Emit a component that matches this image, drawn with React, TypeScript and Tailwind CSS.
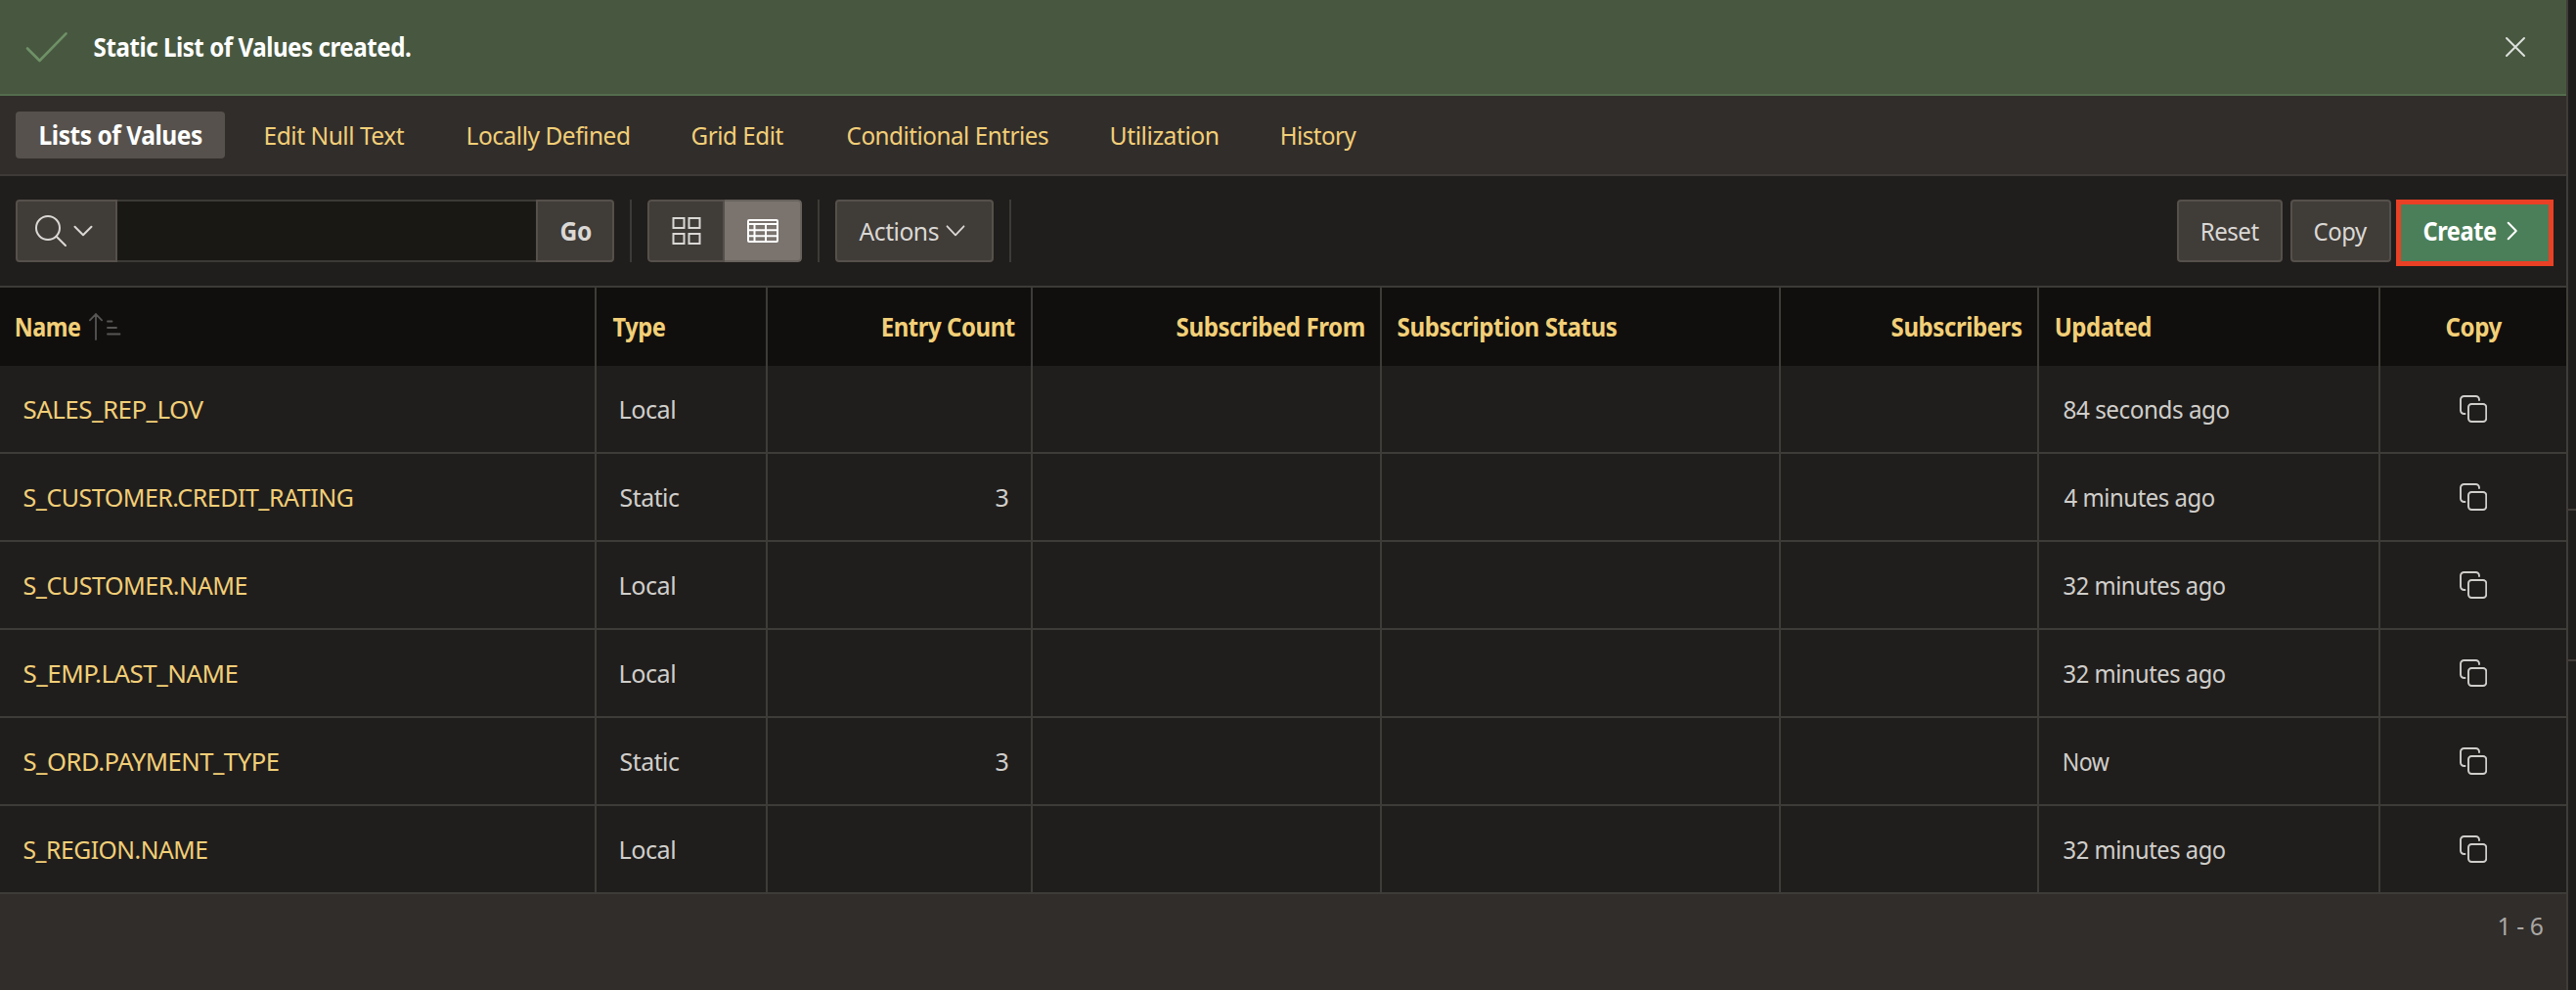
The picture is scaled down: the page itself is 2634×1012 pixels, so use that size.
import { useLayoutEffect, useState } from 'react';
import type { ReactNode } from 'react';

const FONT = '"Noto Sans"';
const SIZE = 26;
const TRACKING = -0.5;

/** One line of text, condensed so that its glyphs span exactly `w` pixels. */
function Text({ w, bold = false, children }: { w: number; bold?: boolean; children: string }) {
  const [fit, setFit] = useState({ scale: 0.9, left: 0 });

  useLayoutEffect(() => {
    const ctx = document.createElement('canvas').getContext('2d');
    if (!ctx) return;
    ctx.font = `${bold ? 700 : 400} ${SIZE}px ${FONT}`;
    const m = ctx.measureText(children);
    const ink = m.actualBoundingBoxLeft + m.actualBoundingBoxRight + TRACKING * (children.length - 1);
    const scale = w / ink;
    setFit({ scale, left: m.actualBoundingBoxLeft * scale + 0.5 });
  }, [w, bold, children]);

  return (
    <span className="inline-block h-9 shrink-0 text-left" style={{ width: w }}>
      <span
        className={
          bold
            ? 'inline-block origin-left leading-9 font-bold tracking-[-0.5px] whitespace-nowrap'
            : 'inline-block origin-left leading-9 font-normal tracking-[-0.5px] whitespace-nowrap'
        }
        style={{ transform: `translate(${fit.left}px, -1px) scaleX(${fit.scale})` }}
      >
        {children}
      </span>
    </span>
  );
}

function Icon({ w, h, sw = 2, className = '', children }: { w: number; h: number; sw?: number; className?: string; children: ReactNode }) {
  return (
    <svg
      width={w}
      height={h}
      viewBox={`0 0 ${w} ${h}`}
      fill="none"
      stroke="currentColor"
      strokeWidth={sw}
      strokeLinecap="round"
      strokeLinejoin="round"
      className={className}
    >
      {children}
    </svg>
  );
}

const CopyIcon = () => (
  <Icon w={28} h={28} sw={1.9} className="shrink-0 text-[#d0cecb]">
    <path d="M20 5V4.5A3.5 3.5 0 0 0 16.5 1H4.5A3.5 3.5 0 0 0 1 4.5V15.5A3.5 3.5 0 0 0 4.5 19H5.5" />
    <rect x="9" y="9" width="18.2" height="18" rx="3.2" />
  </Icon>
);

const TABS: [string, number][] = [
  ['Edit Null Text', 141.7],
  ['Locally Defined', 164.6],
  ['Grid Edit', 93.4],
  ['Conditional Entries', 205.6],
  ['Utilization', 108.7],
  ['History', 77],
];

type Cell = [string, number];
const ROWS: { name: Cell; type: Cell; count?: Cell; updated: Cell }[] = [
  { name: ['SALES_REP_LOV', 184], type: ['Local', 55.5], updated: ['84 seconds ago', 169] },
  { name: ['S_CUSTOMER.CREDIT_RATING', 335.5], type: ['Static', 60], count: ['3', 12.5], updated: ['4 minutes ago', 154] },
  { name: ['S_CUSTOMER.NAME', 227.5], type: ['Local', 55.5], updated: ['32 minutes ago', 165] },
  { name: ['S_EMP.LAST_NAME', 218], type: ['Local', 55.5], updated: ['32 minutes ago', 165] },
  { name: ['S_ORD.PAYMENT_TYPE', 260], type: ['Static', 60], count: ['3', 12.5], updated: ['Now', 47] },
  { name: ['S_REGION.NAME', 187], type: ['Local', 55.5], updated: ['32 minutes ago', 165] },
];

const COLS = 'grid grid-cols-[610px_175px_271px_357px_408px_264px_349px_1fr]';
const CELL = 'flex items-center border-r-2 border-[#3e3c38]';
const BUTTON = 'flex h-16 shrink-0 items-center rounded border-2 border-[#56504b] bg-[#403c38]';
const Divider = () => <div className="ml-4 h-16 w-[2px] shrink-0 bg-[#3d3b37]" />;

export default function App() {
  return (
    <div className="flex h-[1012px] w-[2634px] overflow-hidden bg-[#201e1c] font-['Noto_Sans',sans-serif] text-[26px] text-[#d0cecb]">
      <main className="flex w-[2626px] shrink-0 flex-col border-r-2 border-[#403d39] bg-[#312d2a]">
        <div className="flex h-[98px] shrink-0 items-center justify-between border-b-2 border-[#546d4c] bg-[#485840] pr-[41px] pl-[26px] text-white">
          <div className="flex items-center">
            <Icon w={44} h={32} sw={2.6} className="mr-[26px] text-[#6f9167]">
              <path d="M2 17.5 14.5 30 41.5 2.3" />
            </Icon>
            <Text w={323} bold>Static List of Values created.</Text>
          </div>
          <Icon w={22} h={22} className="text-[#dde0db]">
            <path d="M2 2 20 20M20 2 2 20" />
          </Icon>
        </div>

        <nav className="flex h-[82px] shrink-0 items-center gap-[65px] border-b-2 border-[#3d3a37] pl-4 text-[#f2cf78]">
          <div className="-mr-6 flex h-12 w-[214px] items-center rounded bg-[#56514c] pl-[25px] text-white">
            <Text w={164.7} bold>Lists of Values</Text>
          </div>
          {TABS.map(([label, w]) => (
            <Text key={label} w={w}>{label}</Text>
          ))}
        </nav>

        <div className="flex h-[114px] shrink-0 items-center border-b-2 border-[#3d3b37] bg-[#201e1c] pr-[13px] pl-4 text-[#dad8d5]">
          <div className="flex h-16 w-[612px] shrink-0">
            <div className="flex w-[104px] items-center rounded-l border-2 border-[#56504b] bg-[#403c38] pl-[17px]">
              <Icon w={34} h={34} className="mr-[6px]">
                <circle cx="14" cy="14" r="12" />
                <path d="M22.7 22.7 32 32" />
              </Icon>
              <Icon w={20} h={12}>
                <path d="M1.5 1.7 10 10.2 18.5 1.7" />
              </Icon>
            </div>
            <div className="flex-1 border-y-2 border-[#3c3a36] bg-[#191815]" />
            <div className="flex w-20 items-center justify-center rounded-r border-2 border-[#56504b] bg-[#403c38]">
              <Text w={30.6} bold>Go</Text>
            </div>
          </div>

          <Divider />

          <div className="ml-4 flex h-16 w-[158px] shrink-0 overflow-hidden rounded">
            <div className="flex w-[79px] items-center justify-center rounded-l border-2 border-[#56504b] bg-[#403c38]">
              <Icon w={30} h={28}>
                <g strokeLinejoin="miter">
                  <rect x="1.5" y="1" width="11" height="10" />
                  <rect x="17.5" y="1" width="11" height="10" />
                  <rect x="1.5" y="17" width="11" height="10" />
                  <rect x="17.5" y="17" width="11" height="10" />
                </g>
              </Icon>
            </div>
            <div className="flex w-[79px] items-center justify-center rounded-r border-2 border-l-0 border-[#69635e] bg-[#7a736e] text-white">
              <Icon w={32} h={24}>
                <rect x="1" y="1" width="30" height="22" rx="1" />
                <path d="M1 5H31M1 11.2H31M1 17.2H31M7.5 5V23M19 5V23" />
              </Icon>
            </div>
          </div>

          <Divider />

          <div className={`${BUTTON} ml-4 w-[162px] pl-[22px]`}>
            <Text w={81.5}>Actions</Text>
            <Icon w={20} h={12} sw={1.8} className="ml-[7px]">
              <path d="M1.5 1.3 10 10.3 18.5 1.3" />
            </Icon>
          </div>

          <Divider />

          <div className={`${BUTTON} ml-auto w-[108px] justify-center`}>
            <Text w={58.3}>Reset</Text>
          </div>
          <div className={`${BUTTON} ml-2 w-[103px] justify-center`}>
            <Text w={54.3}>Copy</Text>
          </div>
          <div className="mt-1 ml-[5px] flex h-[68px] w-[161px] items-center border-5 border-[#ea4025] bg-[#4b7f59] pb-1 pl-[23px] text-white">
            <Text w={74} bold>Create</Text>
            <Icon w={12} h={20} className="ml-[11px]">
              <path d="M1.7 1.7 9.8 10 1.7 18.3" />
            </Icon>
          </div>
        </div>

        <div className={`${COLS} h-20 shrink-0 bg-[#100f0d] text-[#f2cf78]`}>
          <div className={`${CELL} pl-4`}>
            <Text w={66} bold>Name</Text>
            <Icon w={34} h={28} sw={1.8} className="ml-[9px] text-[#575655]">
              <path d="M7 1V27M.9 7.3 7 1.2 13.1 7.3M19 8.5H23.5M19 15H28M19 21.5H31.5" />
            </Icon>
          </div>
          <div className={`${CELL} pl-4`}><Text w={54} bold>Type</Text></div>
          <div className={`${CELL} justify-end pr-[17px]`}><Text w={135.5} bold>Entry Count</Text></div>
          <div className={`${CELL} justify-end pr-[17px]`}><Text w={191.5} bold>Subscribed From</Text></div>
          <div className={`${CELL} pl-4`}><Text w={223.5} bold>Subscription Status</Text></div>
          <div className={`${CELL} justify-end pr-[17px]`}><Text w={132.5} bold>Subscribers</Text></div>
          <div className={`${CELL} pl-[17px]`}><Text w={96.7} bold>Updated</Text></div>
          <div className="flex items-center justify-center"><Text w={57} bold>Copy</Text></div>
        </div>

        {ROWS.map((r) => (
          <div key={r.name[0]} className={`${COLS} h-[90px] shrink-0 border-b-2 border-[#3e3c38] bg-[#201e1c]`}>
            <div className={`${CELL} pl-6 text-[#f2cf78]`}><Text w={r.name[1]}>{r.name[0]}</Text></div>
            <div className={`${CELL} pl-6`}><Text w={r.type[1]}>{r.type[0]}</Text></div>
            <div className={`${CELL} justify-end pr-6`}>{r.count && <Text w={r.count[1]}>{r.count[0]}</Text>}</div>
            <div className={CELL} />
            <div className={CELL} />
            <div className={CELL} />
            <div className={`${CELL} pl-[25px]`}><Text w={r.updated[1]}>{r.updated[0]}</Text></div>
            <div className="flex items-center justify-center"><CopyIcon /></div>
          </div>
        ))}

        <footer className="flex justify-end pt-[14px] pr-[25px] text-[#a9a7a4]">
          <Text w={44.5}>1 - 6</Text>
        </footer>
      </main>

      <aside className="flex flex-1 flex-col">
        <div className="h-[522px] border-b-2 border-[#403d39]" />
        <div className="h-[154px] border-b-2 border-[#403d39]" />
      </aside>
    </div>
  );
}
